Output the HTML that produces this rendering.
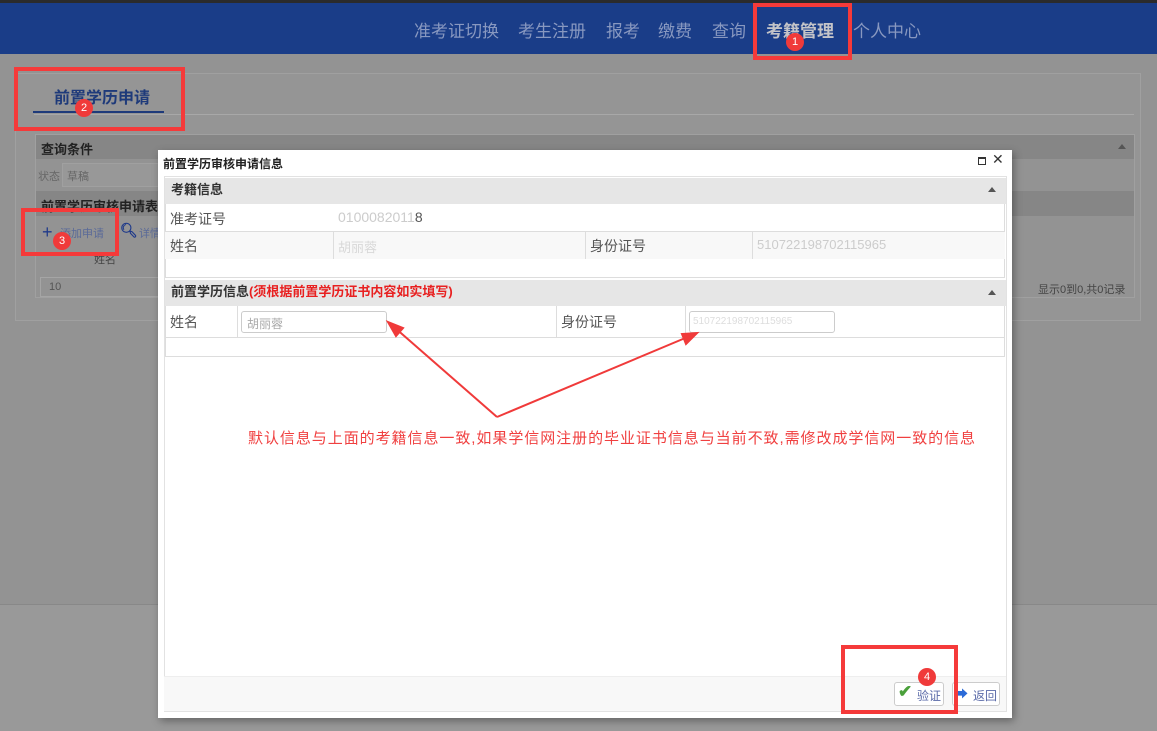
<!DOCTYPE html>
<html><head><meta charset="utf-8"><style>
*{margin:0;padding:0;box-sizing:border-box}
body{width:1157px;height:731px;overflow:hidden;position:relative;background:#939393;font-family:"Liberation Sans","Noto Sans CJK SC",sans-serif;font-size:13px;color:#333}
.a{position:absolute}
.nav span{position:absolute;top:14px;font-size:17px;color:#8898c0;white-space:nowrap}
.rb{position:absolute;border:4px solid #f53a3a}
.num{position:absolute;width:18px;height:18px;border-radius:50%;background:#f03a3a;color:#fff;font-size:11px;text-align:center;line-height:18px}
.hd{position:absolute;background:#e6e6e6;font-weight:bold;font-size:13px;padding-left:6px;line-height:24px}
.lb{position:absolute;font-size:14px;color:#555}
.tri{position:absolute;width:0;height:0;border-left:4px solid transparent;border-right:4px solid transparent;border-bottom:5px solid #555}
</style></head><body>
<div class="a" style="left:0;top:0;width:1157px;height:3px;background:#2b2b2b"></div>
<div class="a nav" style="left:0;top:3px;width:1157px;height:51px;background:#1a3d88">
<span style="left:414px">准考证切换</span><span style="left:518px">考生注册</span><span style="left:606px">报考</span><span style="left:658px">缴费</span><span style="left:712px">查询</span><span style="left:766px;color:#c4c4c8;font-weight:bold">考籍管理</span><span style="left:853px">个人中心</span>
</div>
<div class="a" style="left:15px;top:73px;width:1126px;height:248px;border:1px solid #a0a0a0;background:#959595"></div>
<div class="a" style="left:34px;top:114px;width:1100px;height:1px;background:#a8a8a8"></div>
<div class="a" style="left:54px;top:84px;font-size:16px;font-weight:bold;color:#1e3a7a">前置学历申请</div>
<div class="a" style="left:33px;top:111px;width:131px;height:2px;background:#1e3a7a"></div>
<div class="a" style="left:35px;top:134px;width:1100px;height:164px;border:1px solid #a0a0a0;background:#939393"></div>
<div class="a" style="left:36px;top:135px;width:1098px;height:24px;background:#868686"></div>
<div class="a" style="left:41px;top:139px;font-weight:bold;color:#222">查询条件</div>
<div class="tri" style="left:1118px;top:144px"></div>
<div class="a" style="left:38px;top:168px;font-size:11px;color:#666">状态</div>
<div class="a" style="left:62px;top:163px;width:100px;height:24px;background:#989898;border:1px solid #a0a0a0;font-size:11px;color:#666;padding:4px">草稿</div>
<div class="a" style="left:36px;top:191px;width:1098px;height:25px;background:#868686"></div>
<div class="a" style="left:41px;top:196px;font-weight:bold;color:#222">前置学历审核申请表</div>
<div class="a" style="left:42px;top:222px;font-size:18px;color:#1f3a8a">+</div>
<div class="a" style="left:60px;top:225px;font-size:11px;color:#5a6a98">添加申请</div>
<div class="a" style="left:120px;top:222px;font-size:14px;color:#1f3a8a;font-weight:bold">🔍︎</div>
<div class="a" style="left:139px;top:225px;font-size:11px;color:#5a6a98">详情</div>
<div class="a" style="left:94px;top:251px;font-size:11px;color:#444">姓名</div>
<div class="a" style="left:40px;top:277px;width:130px;height:20px;border:1px solid #a5a5a5;font-size:11px;color:#555;padding:3px 8px">10</div>
<div class="a" style="left:1038px;top:281px;font-size:11px;color:#444">显示0到0,共0记录</div>
<div class="a" style="left:0;top:604px;width:1157px;height:1px;background:#888"></div>
<div class="a" style="left:0;top:605px;width:1157px;height:126px;background:#999"></div>
<div class="a" style="left:158px;top:150px;width:854px;height:568px;background:#fff;box-shadow:2px 3px 8px rgba(0,0,0,.35)"></div>
<div class="a" style="left:163px;top:155px;font-weight:bold;font-size:12px;color:#222">前置学历审核申请信息</div>
<div class="a" style="left:978px;top:157px;width:8px;height:8px;border:1px solid #333;border-top-width:2px"></div>
<div class="a" style="left:992px;top:151px;font-size:14px;color:#333">✕</div>
<div class="a" style="left:164px;top:176px;width:843px;height:536px;border:1px solid #e2e2e2"></div>
<div class="hd" style="left:165px;top:178px;width:841px;height:26px;line-height:24px">考籍信息</div>
<div class="tri" style="left:988px;top:187px"></div>
<div class="a" style="left:165px;top:204px;width:840px;height:55px;border:1px solid #ddd;border-top:0"></div>
<div class="a" style="left:165px;top:231px;width:840px;height:28px;background:#f8f8f8;border-top:1px solid #ddd"></div>
<div class="a" style="left:333px;top:231px;width:1px;height:28px;background:#ddd"></div>
<div class="a" style="left:585px;top:231px;width:1px;height:28px;background:#ddd"></div>
<div class="a" style="left:752px;top:231px;width:1px;height:28px;background:#ddd"></div>
<div class="lb" style="left:170px;top:209px">准考证号</div>
<div class="a" style="left:338px;top:209px;color:#ccc;font-size:14px">0100082011<span style="color:#555">8</span></div>
<div class="lb" style="left:170px;top:236px">姓名</div>
<div class="a" style="left:338px;top:237px;color:#d8d8d8;font-size:13px">胡丽蓉</div>
<div class="lb" style="left:590px;top:236px">身份证号</div>
<div class="a" style="left:757px;top:237px;color:#ccc;font-size:13px">510722198702115965</div>
<div class="a" style="left:165px;top:259px;width:840px;height:19px;border:1px solid #ddd;border-top:0"></div>
<div class="hd" style="left:165px;top:280px;width:841px;height:26px">前置学历信息<span style="color:#e82020">(须根据前置学历证书内容如实填写)</span></div>
<div class="tri" style="left:988px;top:290px"></div>
<div class="a" style="left:165px;top:306px;width:840px;height:51px;border:1px solid #ddd;border-top:0"></div>
<div class="a" style="left:165px;top:337px;width:840px;height:1px;background:#ddd"></div>
<div class="a" style="left:237px;top:306px;width:1px;height:31px;background:#ddd"></div>
<div class="a" style="left:556px;top:306px;width:1px;height:31px;background:#ddd"></div>
<div class="a" style="left:685px;top:306px;width:1px;height:31px;background:#ddd"></div>
<div class="lb" style="left:170px;top:312px">姓名</div>
<div class="a" style="left:241px;top:311px;width:146px;height:22px;border:1px solid #ccc;border-radius:3px;font-size:12px;color:#aaa;padding:3px 5px">胡丽蓉</div>
<div class="lb" style="left:561px;top:312px">身份证号</div>
<div class="a" style="left:689px;top:311px;width:146px;height:22px;border:1px solid #ccc;border-radius:3px;font-size:10px;color:#ddd;padding:4px 3px">510722198702115965</div>
<div class="a" style="left:164px;top:676px;width:842px;height:35px;background:#f8f8f8;border-top:1px solid #eee"></div>
<div class="a" style="left:894px;top:682px;width:50px;height:24px;border:1px solid #ccc;border-radius:3px;background:#fff;font-size:12px;color:#5a6aa8;padding:4px 0 0 22px">验证</div>
<div class="a" style="left:898px;top:682px;font-size:17px;color:#4aa03a;font-weight:bold">✔</div>
<div class="a" style="left:952px;top:682px;width:48px;height:24px;border:1px solid #ccc;border-radius:3px;background:#fff;font-size:12px;color:#5a6aa8;padding:4px 0 0 20px">返回</div>
<div class="a" style="left:954px;top:684px;font-size:14px;color:#2a6ad8">➡</div>
<svg class="a" style="left:0;top:0" width="1157" height="731">
<g stroke="#f03a3a" stroke-width="2" fill="#f03a3a">
<line x1="497" y1="417" x2="394" y2="327"/><polygon points="388,322 403,328 396,336"/>
<line x1="497" y1="417" x2="690" y2="336"/><polygon points="697,333 686,344 682,334"/>
</g></svg>
<div class="a" style="left:248px;top:427px;font-size:15px;letter-spacing:0.95px;color:#f04040;white-space:nowrap">默认信息与上面的考籍信息一致,如果学信网注册的毕业证书信息与当前不致,需修改成学信网一致的信息</div>
<div class="rb" style="left:753px;top:3px;width:99px;height:57px"></div>
<div class="rb" style="left:14px;top:67px;width:171px;height:64px"></div>
<div class="rb" style="left:21px;top:208px;width:98px;height:48px"></div>
<div class="rb" style="left:841px;top:645px;width:117px;height:69px"></div>
<div class="num" style="left:786px;top:33px">1</div>
<div class="num" style="left:75px;top:99px">2</div>
<div class="num" style="left:53px;top:232px">3</div>
<div class="num" style="left:918px;top:668px">4</div>
</body></html>
